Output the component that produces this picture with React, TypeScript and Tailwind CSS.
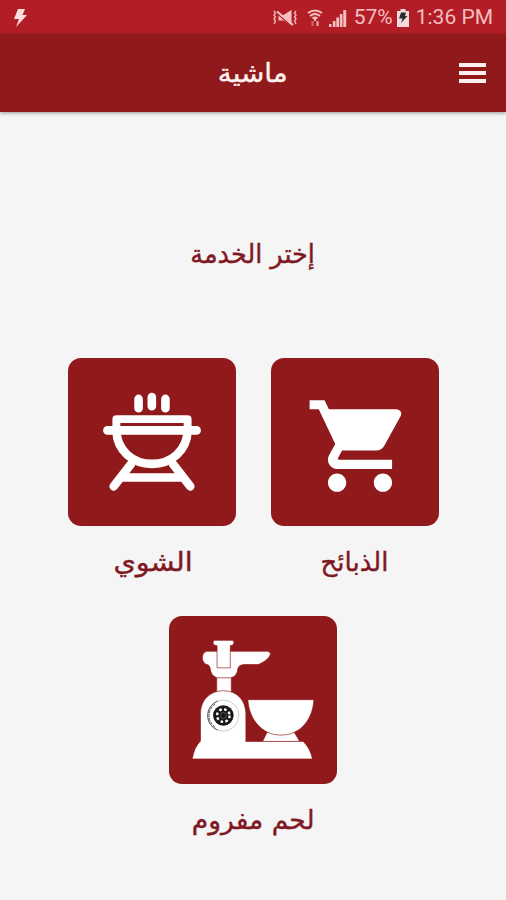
import type { ReactNode } from 'react';
import { MdShoppingCart } from 'react-icons/md';

function MutedIcon() {
  return (
    <svg viewBox="0 0 26 18" className="h-[18px] w-[26px]" fill="none" stroke="currentColor">
      <path d="M2 2l1.500 2L2 6l1.500 2L2 10l1.500 2L2 15M24 2l-1.500 2L24 6l-1.500 2L24 10l-1.500 2L24 15" strokeWidth="1.300" />
      <path d="M6.500 6h5l8-5v15.500l-8-5h-5z" fill="currentColor" stroke="none" />
      <path d="M5 4.500l15 13" stroke="#b31e26" strokeWidth="1.300" />
      <path d="M5 2.500l16 13.500" strokeWidth="2" />
    </svg>
  );
}

function WifiIcon() {
  return (
    <svg viewBox="0 0 16 18" className="h-[18px] w-4" fill="none" stroke="currentColor">
      <path d="M1 4q7-5 14 0M3 7q5-4 10 0M5.500 9.500q2.500-2 5 0" strokeWidth="2" />
      <path d="M8 9v3" strokeWidth="2" />
      <path d="M5.500 12v5" strokeWidth="2.200" opacity="0.450" />
      <path d="M10.500 12v5" strokeWidth="2.200" opacity="0.850" />
    </svg>
  );
}

function SignalIcon() {
  return (
    <svg viewBox="0 0 18 18" className="h-[18px] w-[18px]" fill="currentColor">
      <path d="M0 15h2.500v3H0zM3.800 12h2.700v6H3.800zM7.300 8.500H10V18H7.300zM10.800 5h2.700v13h-2.700zM14.300 1h2.900v17h-2.900z" />
    </svg>
  );
}

function BatteryIcon() {
  return (
    <svg viewBox="0 0 12 18" className="h-[18px] w-3">
      <path d="M3.500 0h5v2H12v16H0V2h3.500z" fill="#f5dada" />
      <path d="M4 3.500h5L8 7h2.500L4 14l1.500-4.500H2z" fill="#26302f" />
    </svg>
  );
}

function GrillIcon() {
  return (
    <svg viewBox="24 24 507 504" className="size-full" fill="none" stroke="#fff" strokeWidth="26" strokeLinecap="round" strokeLinejoin="round">
      <path d="M237 146v28M277 140v28M318 146v28" />
      <path d="M143 241H412" />
      <path d="M170 240V207H385V240" strokeWidth="24" />
      <path d="M170 241C172 303 220 342 277.500 342S383 303 385 241" />
      <path d="M214 343L162 410M341 343L393 410M190 383H365" />
    </svg>
  );
}

function MincerIcon() {
  return (
    <svg viewBox="-48 -57 507 504" className="size-full" fill="#fff" stroke="#8f191b" strokeWidth="2">
      {/* tray and neck */}
      <path d="M96 125H140V180H96z" />
      <path d="M66 48H250Q260 50 258 58Q252 75 222 88H178Q162 90 160 100Q158 124 138 128H96Q78 122 76 98Q74 88 62 86Q51 78 53 62Q56 50 66 48z" />
      <path d="M88 15H145Q151 22 145 29L137 31V98H97V31L88 29Q82 22 88 15z" />
      {/* body and base */}
      <path d="M234 321L248 292H330L347 321z" />
      <path d="M22 373Q28 338 47 319V236C48 192 78 167 116 167S183 192 184 236V320H357Q378 340 385 373z" />
      <path d="M190 194H389C386 256 346 301 290 301S194 256 190 194z" />
      {/* grinding plate */}
      <g fill="none" stroke="#555">
        <circle cx="116" cy="242" r="47" stroke="#999" strokeWidth="1.500" />
        <path d="M99 198A47 47 0 0 0 99 286" strokeWidth="3" />
        <path d="M91 207A43 43 0 0 0 91 277" strokeWidth="3" strokeDasharray="9 3" />
      </g>
      <circle cx="116" cy="242" r="31" fill="#171717" stroke="none" />
      <circle cx="116" cy="242" r="19" fill="none" stroke="#fff" strokeWidth="7" strokeDasharray="8 6.900" />
      <circle cx="116" cy="242" r="9" fill="none" stroke="#777" strokeWidth="2" />
    </svg>
  );
}

function Service({ label, labelClass, children }: { label: string; labelClass: string; children: ReactNode }) {
  return (
    <button className="flex w-[168px] flex-col items-center">
      <span className="flex size-[168px] items-center justify-center overflow-hidden rounded-[13px] bg-[#8f191b]">
        {children}
      </span>
      <span dir="rtl" className={`mt-4 h-10 text-[26px] leading-10 whitespace-nowrap text-[#7f1823] [-webkit-text-stroke:0.4px] ${labelClass}`}>
        {label}
      </span>
    </button>
  );
}

export default function App() {
  return (
    <div className="flex h-[900px] w-full flex-col overflow-hidden bg-[#f5f5f5] font-['DejaVu_Sans',sans-serif]">
      <div className="flex h-[34px] shrink-0 items-center bg-[#b31e26] pt-0.5 pr-[13px] pl-[14px] font-[Roboto,sans-serif] text-[21px] text-[#f3bfc0]">
        <svg viewBox="0 0 13 18" className="h-[18px] w-[13px]" fill="#fbdedf">
          <path d="M4 0h7L8.500 6H13L2 18l3-8H0z" />
        </svg>
        <div className="ml-auto flex items-center">
          <MutedIcon />
          <span className="ml-[9px] flex"><WifiIcon /></span>
          <span className="ml-1.5 flex"><SignalIcon /></span>
          <span className="ml-[7px]">57%</span>
          <span className="ml-1 flex"><BatteryIcon /></span>
          <span className="ml-[7px]">1:36 PM</span>
        </div>
      </div>

      <header className="grid h-[78px] shrink-0 grid-cols-[1fr_auto_1fr] items-center bg-[#8f191b] px-5 shadow-[0_1px_4px_rgba(0,0,0,0.4)]">
        <h1 dir="rtl" className="col-start-2 scale-x-[1.07] text-[26px] leading-10 text-[#fff0ef] [-webkit-text-stroke:0.4px]">ماشية</h1>
        <button className="flex w-[27px] flex-col gap-1 justify-self-end" aria-label="القائمة">
          <span className="h-1 bg-[#fff0ef]" />
          <span className="h-1 bg-[#fff0ef]" />
          <span className="h-1 bg-[#fff0ef]" />
        </button>
      </header>

      <main className="flex flex-col items-center pt-[122px]">
        <h2 dir="rtl" className="h-10 scale-x-[0.98] text-[26px] leading-10 text-[#7f1823] [-webkit-text-stroke:0.4px]">إختر الخدمة</h2>
        <div className="mt-[84px] flex gap-[35px]">
          <Service label="الشوي" labelClass="ml-[3px] scale-x-110">
            <GrillIcon />
          </Service>
          <Service label="الذبائح" labelClass="">
            <MdShoppingCart className="mt-2 ml-2.5 size-[110px] text-white" />
          </Service>
        </div>
        <div className="mt-[34px]">
          <Service label="لحم مفروم" labelClass="scale-x-[1.02]">
            <MincerIcon />
          </Service>
        </div>
      </main>
    </div>
  );
}
